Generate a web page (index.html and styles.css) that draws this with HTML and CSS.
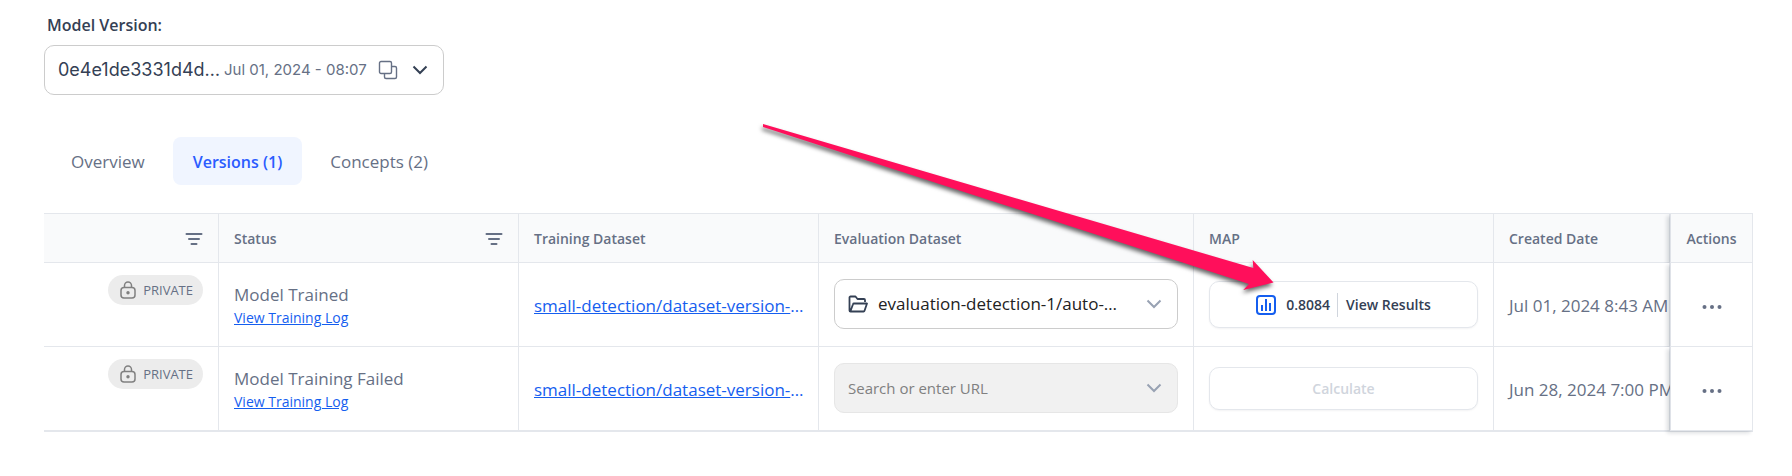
FILE: index.html
```html
<!DOCTYPE html>
<html lang="en">
<head>
<meta charset="utf-8">
<title>Model Versions</title>
<link rel="stylesheet" href="styles.css">
</head>
<body>
<svg class="symbols" aria-hidden="true">
  <symbol id="chevron" viewBox="0 0 16 10"><path d="M1.500 1.500 8 8 14.500 1.500" fill="none" stroke="currentColor" stroke-width="2"/></symbol>
  <symbol id="filter" viewBox="0 0 18 14"><path d="M1.500 2H16.500M4 7H14M6.500 12H11.500" fill="none" stroke="currentColor" stroke-width="2" stroke-linecap="round"/></symbol>
  <symbol id="lock" viewBox="0 0 16 18"><path d="M4.500 7V4.500a3.500 3.500 0 0 1 7 0V7" fill="none" stroke="currentColor" stroke-width="1.500"/><rect x="1" y="6.500" width="14" height="10.500" rx="3" fill="none" stroke="currentColor" stroke-width="1.500"/><circle cx="8" cy="11.700" r="1.700" fill="currentColor"/></symbol>
  <symbol id="dots" viewBox="0 0 20 6"><g fill="currentColor"><circle cx="2.500" cy="3" r="2"/><circle cx="10" cy="3" r="2"/><circle cx="17.500" cy="3" r="2"/></g></symbol>
</svg>

<main class="page">
  <label class="version-label" for="version">Model Version:</label>
  <div class="field version-box">
    <select class="version-select" id="version"><option>0e4e1de3331d4d…</option></select>
    <span class="version-date">Jul 01, 2024 - 08:07</span>
    <button class="icon-button copy" type="button" aria-label="Copy version ID">
      <svg width="20" height="20" viewBox="0 0 20 20" fill="none" stroke="currentColor" stroke-width="1.400"><rect x="6.500" y="6.500" width="12" height="12" rx="1.500"/><rect x="1.500" y="1.500" width="12" height="12" rx="1.500" fill="#fff"/></svg>
    </button>
    <svg class="chevron dark"><use href="#chevron"/></svg>
  </div>

  <nav class="tabs">
    <a class="tab" href="#overview">Overview</a>
    <a class="tab active" href="#versions" aria-current="page">Versions (1)</a>
    <a class="tab" href="#concepts">Concepts (2)</a>
  </nav>

  <div class="table-wrap">
    <table class="versions">
      <colgroup>
        <col class="col-visibility"><col class="col-medium"><col class="col-medium"><col class="col-wide"><col class="col-medium"><col><col class="col-actions">
      </colgroup>
      <thead>
        <tr>
          <th><div class="head"><button class="icon-button" type="button" aria-label="Filter visibility"><svg class="filter"><use href="#filter"/></svg></button></div></th>
          <th><div class="head">Status<button class="icon-button" type="button" aria-label="Filter status"><svg class="filter"><use href="#filter"/></svg></button></div></th>
          <th>Training Dataset</th>
          <th>Evaluation Dataset</th>
          <th>MAP</th>
          <th>Created Date</th>
          <th class="actions">Actions</th>
        </tr>
      </thead>
      <tbody>
        <tr>
          <td class="visibility"><span class="badge"><svg class="lock"><use href="#lock"/></svg>PRIVATE</span></td>
          <td><div>Model Trained</div><a class="log" href="#log-1">View Training Log</a></td>
          <td><a class="dataset" href="#dataset-1">small-detection/dataset-version-</a><span class="more">…</span></td>
          <td>
            <div class="field">
              <svg class="folder" viewBox="0 0 20 18" fill="none" stroke="currentColor" stroke-width="1.800" stroke-linejoin="round"><path d="M17 7V5a1 1 0 0 0-1-1H9.500L7.500 1.500H2.500a1 1 0 0 0-1 1V15.500a1 1 0 0 0 1 1H15.500a1 1 0 0 0 1-.7L19 8.500H6a1 1 0 0 0-1 .7L2.500 16"/></svg>
              <input class="combo" type="text" value="evaluation-detection-1/auto-…" aria-label="Evaluation dataset">
              <svg class="chevron"><use href="#chevron"/></svg>
            </div>
          </td>
          <td>
            <button class="result" type="button">
              <svg class="chart" viewBox="0 0 20 20" fill="none" stroke="currentColor" stroke-width="2"><rect x="1" y="1" width="18" height="18" rx="3"/><path d="M6 10V16M10 4V16M14 8V16"/></svg>
              <span>0.8084</span><span class="view">View Results</span>
            </button>
          </td>
          <td>Jul 01, 2024 8:43 AM</td>
          <td class="actions"><button class="icon-button" type="button" aria-label="More actions"><svg class="dots"><use href="#dots"/></svg></button></td>
        </tr>
        <tr>
          <td class="visibility"><span class="badge"><svg class="lock"><use href="#lock"/></svg>PRIVATE</span></td>
          <td><div>Model Training Failed</div><a class="log" href="#log-2">View Training Log</a></td>
          <td><a class="dataset" href="#dataset-2">small-detection/dataset-version-</a><span class="more">…</span></td>
          <td>
            <div class="field disabled">
              <input class="combo" type="text" placeholder="Search or enter URL" aria-label="Evaluation dataset" disabled>
              <svg class="chevron"><use href="#chevron"/></svg>
            </div>
          </td>
          <td><button class="result calculate" type="button" disabled>Calculate</button></td>
          <td>Jun 28, 2024 7:00 PM</td>
          <td class="actions"><button class="icon-button" type="button" aria-label="More actions"><svg class="dots"><use href="#dots"/></svg></button></td>
        </tr>
      </tbody>
    </table>
  </div>

  <svg class="arrow" width="530" height="190" viewBox="750 110 530 190" aria-hidden="true">
    <path d="M763 124 1253.300 268 1252.700 260 1273.500 282.500 1243.300 290 1249 284 763 127Z" fill="#ff0f5b"/>
  </svg>
</main>
</body>
</html>
```
FILE: styles.css
```css
* { box-sizing: border-box; }

body {
  margin: 0;
  background: #fff;
  color: #667085;
  font: 17px/24px "Open Sans", "Noto Sans", sans-serif;
}

button, input, select { font: inherit; color: inherit; }

.symbols { position: absolute; width: 0; height: 0; }

.page { position: relative; padding: 13px 39px 44px 44px; }

.version-label {
  display: block;
  padding-left: 3px;
  margin-bottom: 8px;
  color: #344054;
  font-size: 16px;
  font-weight: 600;
}

.field {
  display: flex;
  align-items: center;
  height: 50px;
  padding: 0 15px 0 13px;
  border: 1px solid #ccc;
  border-radius: 10px;
  background: #fff;
}

.version-box { width: 400px; }

.version-select {
  appearance: none;
  width: 166px;
  padding: 0;
  border: 0;
  background: none;
  color: #344054;
  font: 18px/24px Inter, sans-serif;
}

.version-date { flex: 1; font: 15px/24px Inter, sans-serif; white-space: nowrap; }

.icon-button {
  display: inline-flex;
  padding: 0;
  border: 0;
  background: none;
  vertical-align: middle;
  cursor: pointer;
}

.copy { margin-right: 14px; }

.chevron { flex: none; width: 16px; height: 10px; color: #98a2b3; }
.chevron.dark { color: #344054; }

.tabs { display: flex; gap: 4px; margin: 42px 0 28px; padding-left: 3px; }

.tab {
  padding: 13px 24px 11px;
  border-radius: 8px;
  color: inherit;
  text-decoration: none;
}

.tab.active {
  padding-inline: 20px;
  background: #f0f5ff;
  color: #2b5cff;
  font-size: 16px;
  font-weight: 600;
}

.table-wrap { overflow-x: auto; padding-bottom: 8px; }

.versions {
  width: 100%;
  min-width: 1600px;
  table-layout: fixed;
  border-collapse: separate;
  border-spacing: 0;
  border-top: 1px solid #e4e7ec;
  border-bottom: 1px solid #e4e7ec;
}

.col-visibility { width: 175px; }
.col-medium { width: 300px; }
.col-wide { width: 375px; }
.col-actions { width: 83px; }

th, td {
  padding: 2px 15px 0;
  border-right: 1px solid #e4e7ec;
  border-bottom: 1px solid #e4e7ec;
  text-align: left;
  white-space: nowrap;
}

th { height: 49px; background: #f9fafb; font-size: 14px; font-weight: 600; }
td { height: 84px; }
td .field { margin-bottom: 4px; }

.head { display: flex; align-items: center; }
.head .icon-button { margin-left: auto; }
.filter { width: 18px; height: 14px; }

.visibility { padding-top: 12px; text-align: right; vertical-align: top; }

.badge {
  display: inline-flex;
  align-items: center;
  gap: 7px;
  height: 30px;
  padding: 0 10px 0 12px;
  border-radius: 15px;
  background: #ececec;
  font-size: 13px;
}

.lock { width: 16px; height: 18px; color: #808080; }

.log { display: block; color: #155eef; font-size: 14px; line-height: 22px; }
.dataset, .more { color: #155eef; }

.folder { flex: none; width: 20px; height: 18px; margin-right: 10px; color: #344054; }

.combo { flex: 1; min-width: 0; padding: 0; border: 0; background: none; color: #222; outline: 0; }
.combo::placeholder { color: #808080; opacity: 1; }
.disabled { border-color: #e6e6e6; background: #f1f1f1; }
.disabled .combo { font-size: 15px; }

.result {
  display: flex;
  align-items: center;
  justify-content: center;
  gap: 10px;
  width: 100%;
  height: 47px;
  margin-bottom: 2px;
  border: 1px solid #e4e7ec;
  border-radius: 10px;
  background: #fff;
  box-shadow: 0 1px 2px #1018280d;
  color: #344054;
  font-size: 14px;
  font-weight: 600;
}

.view { margin-left: -3px; padding-left: 8px; border-left: 1px solid #d0d5dd; }
.calculate { height: 43px; color: #d0d5dd; }
.chart { width: 20px; height: 20px; color: #155eef; }

.actions {
  position: sticky;
  right: 0;
  border-left: 1px solid #dfe2e8;
  background: #fff;
  box-shadow: -3px 2px 4px #10182826;
  clip-path: inset(0 0 0 -8px);
  text-align: center;
}
tr:last-child > td.actions { clip-path: inset(0 0 -8px -8px); }
th.actions { background: #f9fafb; }
.dots { width: 20px; height: 6px; }

.arrow { position: absolute; left: 750px; top: 110px; pointer-events: none; filter: drop-shadow(-1px 3px 2px #0009); }
```
